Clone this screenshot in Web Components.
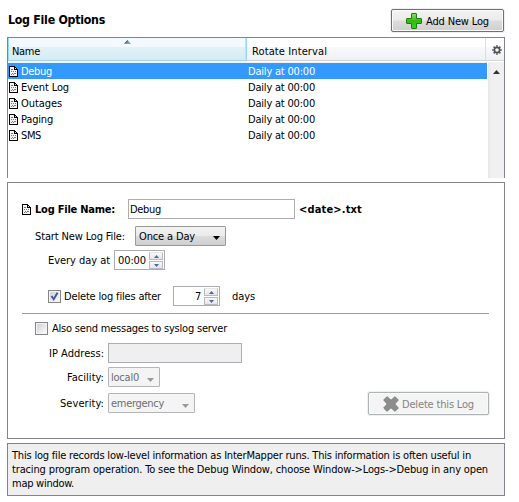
<!DOCTYPE html>
<html lang="en"><head><meta charset="utf-8"><title>Log File Options</title>
<style>
html,body{margin:0;background:#fff}
body{font:11px/16px "DejaVu Sans Condensed","DejaVu Sans","Noto Sans",sans-serif;color:#000;width:519px;height:502px;overflow:hidden}
</style></head><body>
<log-options></log-options>
<script>
const define=(name,html,init)=>{
  const t=document.createElement('template');t.innerHTML=html;
  customElements.define(name,class extends HTMLElement{
    connectedCallback(){
      if(this.shadowRoot)return;
      this.attachShadow({mode:'open'}).append(t.content.cloneNode(true));
      if(init)init.call(this,this.shadowRoot);
    }
  });
};
// A single line of text spaced out to the width given in "w".
define('ui-text',`<style>:host{display:block;white-space:nowrap;flex:none}span{display:block;width:max-content;padding-top:1px;margin-bottom:-1px}</style><span><slot></slot></span>`,function(r){
  const w=+this.getAttribute('w'),s=r.querySelector('span');
  this.style.width=w+'px';
  const n=this.textContent.length,now=s.getBoundingClientRect().width;
  if(now)s.style.letterSpacing=(w-now)/n+'px';
});
define('doc-icon',`<style>:host{display:block;width:9px;height:11px;flex:none}svg{display:block}</style>
<svg width="9" height="11" shape-rendering="crispEdges"><path d="M0 0H6V1H7V2H8V3H9V11H0Z" fill="#000"/><path d="M1 1H5V4H8V10H1Z" fill="#f4f4f4"/><path d="M6 2h1v1h-1z" fill="#ddd"/><path d="M2 3.5h2M2 5.5h1M4 5.5h1M6 5.5h1M3 7.5h1M5 7.5h2M2 8.5h1M4 8.5h1" stroke="#777"/></svg>`);
define('push-button',`<style>:host{display:flex;box-sizing:border-box;height:23px;align-items:center;border:1px solid #707070;border-radius:2px;background:linear-gradient(#f3f3f3,#ebebeb 48%,#dcdcdc 52%,#cfcfcf);box-shadow:inset 0 0 0 1px #fbfbfb,0 0 0 1px #f0f0f0;flex:none}
:host([disabled]){border-color:#adb2b5;background:#f4f4f4;color:#838383}</style><slot></slot>`);
define('plus-icon',`<style>:host{display:block;width:16px;height:16px}svg{display:block}</style><svg width="16" height="16"><defs><linearGradient id="g" x2="0" y2="1"><stop stop-color="#8fe06a"/><stop offset=".5" stop-color="#35b812"/><stop offset="1" stop-color="#2bdc10"/></linearGradient></defs><path d="M6 .5H10Q10.5.5 10.5 1V5.5H15Q15.5 5.5 15.5 6V10Q15.5 10.5 15 10.5H10.5V15Q10.5 15.5 10 15.5H6Q5.5 15.5 5.5 15V10.5H1Q.5 10.5.5 10V6Q.5 5.5 1 5.5H5.5V1Q5.5.5 6 .5Z" fill="url(#g)" stroke="#247a12"/></svg>`);
define('cross-icon',`<style>:host{display:block;width:16px;height:16px}svg{display:block}</style><svg width="16" height="16"><path d="M4 .7 8 4.3 12 .7 15.3 4 11.7 8 15.3 12 12 15.3 8 11.7 4 15.3.7 12 4.3 8 .7 4Z" fill="#8d8d8d" stroke="#7c7c7c" stroke-linejoin="round"/></svg>`);
define('text-field',`<style>:host{display:flex;box-sizing:border-box;height:20px;border:1px solid #abadb3;background:#fff;padding:1px 0 0 1px;flex:none}:host([disabled]){background:#efefef}</style><slot></slot>`);
define('drop-down',`<style>:host{display:flex;box-sizing:border-box;height:20px;border:1px solid #999;border-radius:1px;background:linear-gradient(#f2f2f2,#ebebeb 48%,#dcdcdc 52%,#cfcfcf);padding:1px 5px 0 3px;justify-content:space-between;flex:none}
:host([disabled]){background:#f4f4f4;border-color:#b3b5b8;color:#6d6d6d;padding-left:2px}svg{display:block;margin-top:8px}:host([disabled]) svg{margin-top:9px;color:#999}</style><slot></slot><svg width="7" height="4" fill="currentColor"><path d="M0 0H7L3.5 4Z"/></svg>`);
define('spin-box',`<style>:host{display:flex;box-sizing:border-box;height:20px;border:1px solid #abadb3;background:#fff;padding-right:1px;justify-content:flex-end;flex:none}
div{display:grid;grid-template-rows:8px 8px;gap:1px;width:14px;padding-top:1px;margin-left:3px}
b{box-sizing:border-box;border:1px solid #b9bbc0;background:linear-gradient(#f8f8f8,#e6e6e6);display:grid;place-items:center}b:first-child{border-top-color:#e8e8e8}svg{display:block}
::slotted(*){margin-top:1px}</style><slot></slot><div><b><svg width="5" height="3"><path d="M0 3H5L2.5 0Z" fill="#4c65b5"/></svg></b><b><svg width="5" height="3"><path d="M0 0H5L2.5 3Z" fill="#4c65b5"/></svg></b></div>`);
define('check-box',`<style>:host{display:grid;place-items:center;box-sizing:border-box;width:13px;height:13px;border:1px solid #858585;background:linear-gradient(135deg,#c9cdd2,#f6f6f6 85%);box-shadow:inset 0 0 0 1px #f4f4f4;flex:none}
svg{display:none}:host([checked]) svg{display:block}</style><svg width="11" height="11"><path d="M2.5 5 4.7 8.2 8.5 1.7" fill="none" stroke="#43589f" stroke-width="2"/></svg>`);
define('log-row',`<style>:host{display:flex;height:16px;width:479px;align-items:center}
:host([selected]){background:#3399ff;color:#fff}doc-icon{margin:1px 3px 0 1px}.n{width:227px}</style>
<doc-icon></doc-icon><div class="n"><slot></slot></div><ui-text w="67">Daily at 00:00</ui-text>`);
define('log-table',`<style>:host{display:flex;flex-direction:column;box-sizing:border-box;margin:5px 0 0 7px;width:498px;height:141px;border:1px solid #82838d;border-bottom:0}
.h{display:flex;height:24px;border-bottom:1px solid #f2f2f2;flex:none}
.c{box-sizing:border-box;height:23px;padding:5px 0 0 4px;background:linear-gradient(#fff 9px,#f8f9fb 9px,#eef0f4);border-bottom:1px solid #d5d5d5}
.s{position:relative;width:239px;background:linear-gradient(#f3f9fd 9px,#e1f2f9 9px,#d7ebf4);border:1px solid #96d9f2;border-width:0 1px 1px;box-shadow:inset -1px 0 #b5e6f8;padding-left:3px}
.s svg{position:absolute;left:115px;top:2px}.r{width:239px;padding-left:5px;border-right:1px solid #dcdde0}.g{flex:1;padding:7px 0 0 6px}
.g svg{display:block}
.b{display:flex;flex:1}.l{width:479px}.sb{margin-left:1px;width:16px;background:linear-gradient(90deg,#e6e6e6,#f0f0f0 3px);flex:none}.sb svg{display:block;margin:7px 0 0 5px}</style>
<div class="h"><div class="c s"><ui-text w="28">Name</ui-text><svg width="7" height="4"><path d="M0 4H7L3.5 0Z" fill="#6ca5c1"/><path d="M0 4 3.5 0V2Z" fill="#315872"/></svg></div><div class="c r"><ui-text w="75">Rotate Interval</ui-text></div>
<div class="c g"><svg width="10" height="10" viewBox="0 0 11 11" fill="none" stroke="#515151"><circle cx="5.5" cy="5.5" r="2.9" stroke-width="1.8"/><path stroke-width="1.8" d="M5.5.2V2M5.5 9V10.8M.2 5.5H2M9 5.5H10.8M1.8 1.8 3 3M8 8 9.2 9.2M9.2 1.8 8 3M3 8 1.8 9.2"/></svg></div></div>
<div class="b"><div class="l"><log-row selected><ui-text w="31">Debug</ui-text></log-row><log-row><ui-text w="48">Event Log</ui-text></log-row><log-row><ui-text w="41">Outages</ui-text></log-row><log-row><ui-text w="32">Paging</ui-text></log-row><log-row><ui-text w="20">SMS</ui-text></log-row></div>
<div class="sb"><svg width="7" height="4"><path d="M0 4H7L3.5 0Z" fill="#333"/></svg></div></div>`);
define('form-row',`<style>:host{display:flex;height:20px;align-items:center}</style><slot></slot>`);
define('log-form',`<style>:host{display:block;box-sizing:border-box;margin:4px 0 0 7px;width:498px;height:257px;border:1px solid #82838d;padding:16px 15px 0 14px}
hr{border:0;height:1px;background:#9b9b9b;margin:7px 0 6px}
.lab{display:flex;justify-content:flex-end;width:82px;margin-right:4px}.bottom{display:flex;justify-content:space-between;align-items:flex-start}</style>
<form-row><doc-icon style="margin-top:1px"></doc-icon><ui-text w="80" style="font-weight:bold;margin-left:4px">Log File Name:</ui-text><text-field style="width:167px;margin-left:13px"><ui-text w="31">Debug</ui-text></text-field><ui-text w="63" style="font-weight:bold;margin-left:4px">&lt;date&gt;.txt</ui-text></form-row>
<form-row style="margin-top:7px"><ui-text w="90" style="margin-left:13px">Start New Log File:</ui-text><drop-down style="width:91px;margin-left:10px"><ui-text w="56">Once a Day</ui-text></drop-down></form-row>
<form-row style="margin-top:4px"><ui-text w="62" style="margin-left:26px">Every day at</ui-text><spin-box style="width:51px;margin-left:4px"><ui-text w="28">00:00</ui-text></spin-box></form-row>
<form-row style="margin-top:16px"><check-box checked style="margin-left:26px"></check-box><ui-text w="97" style="margin-left:3px">Delete log files after</ui-text><spin-box style="width:47px;margin-left:12px"><ui-text w="6">7</ui-text></spin-box><ui-text w="23" style="margin-left:12px">days</ui-text></form-row>
<hr>
<form-row style="height:16px"><check-box style="margin-left:13px"></check-box><ui-text w="175" style="margin-left:4px">Also send messages to syslog server</ui-text></form-row>
<form-row style="margin-top:7px"><div class="lab"><ui-text w="55">IP Address:</ui-text></div><text-field disabled style="width:134px"></text-field></form-row>
<form-row style="margin-top:4px"><div class="lab"><ui-text w="37">Facility:</ui-text></div><drop-down disabled style="width:52px"><ui-text w="28">local0</ui-text></drop-down></form-row>
<div class="bottom"><form-row style="margin-top:6px"><div class="lab"><ui-text w="44">Severity:</ui-text></div><drop-down disabled style="width:87px"><ui-text w="53">emergency</ui-text></drop-down></form-row>
<push-button disabled style="width:121px;margin-top:5px;padding-left:14px"><cross-icon></cross-icon><ui-text w="72" style="margin-left:3px">Delete this Log</ui-text></push-button></div>`);
define('log-note',`<style>:host{display:block;box-sizing:border-box;margin:4px 0 0 7px;width:498px;height:53px;border:1px solid #82838d;background:#efefef;padding:4px 4px 0;line-height:14px}</style>
<ui-text w="459">This log file records low-level information as InterMapper runs. This information is often useful in</ui-text><ui-text w="476">tracing program operation. To see the Debug Window, choose Window-&gt;Logs-&gt;Debug in any open</ui-text><ui-text w="62">map window.</ui-text>`);
define('log-options',`<style>:host{display:block}header{display:flex;justify-content:space-between;padding:9px 15px 0 8px;height:23px}</style>
<header><ui-text w="97" style="font-weight:bold;font-size:12.3px;line-height:20px">Log File Options</ui-text><push-button style="width:113px;padding-left:14px"><plus-icon></plus-icon><ui-text w="63" style="margin-left:4px">Add New Log</ui-text></push-button></header>
<log-table></log-table><log-form></log-form><log-note></log-note>`);
</script></body></html>
